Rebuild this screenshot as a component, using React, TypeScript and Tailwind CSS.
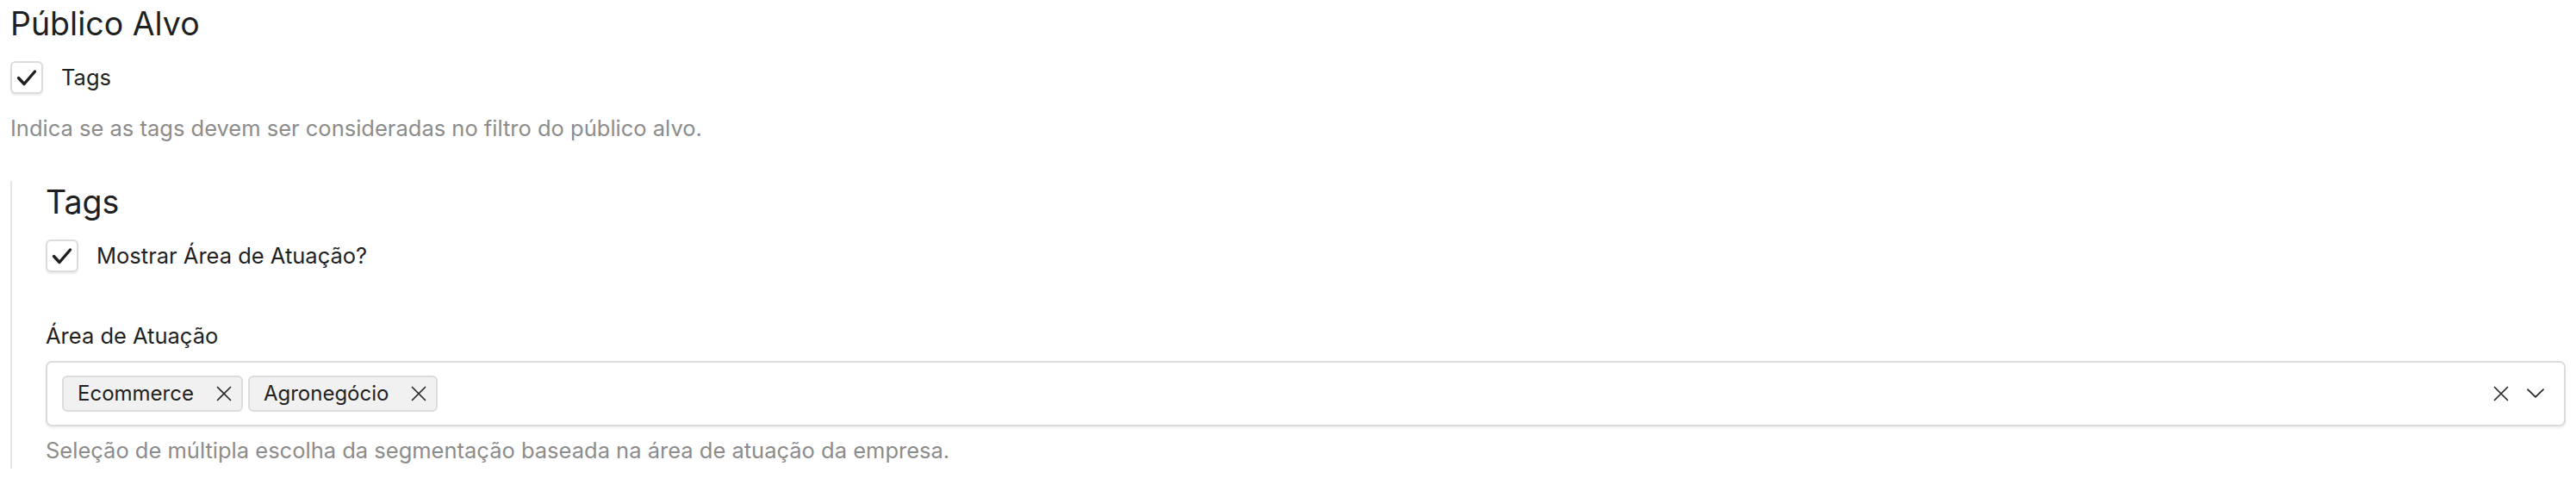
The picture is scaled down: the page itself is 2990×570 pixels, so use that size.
function CheckBox() {
  return (
    <span className="flex h-[38px] w-[38px] shrink-0 items-center justify-center rounded-[6px] border-2 border-[#dcdcdc] bg-white shadow-[0_2px_2px_rgba(0,0,0,0.08)]">
      <svg viewBox="0 0 34 34" className="h-[34px] w-[34px]" fill="none" stroke="#1f1f1f" strokeWidth={3.4} strokeLinecap="round" strokeLinejoin="round">
        <path d="M7.5 17.5l6.5 7L26.5 10" />
      </svg>
    </span>
  );
}

function Cross({ size = 18 }: { size?: number }) {
  return (
    <svg viewBox="0 0 18 18" width={size} height={size} fill="none" stroke="#2a2a2a" strokeWidth={1.7} strokeLinecap="round">
      <path d="M1.5 1.5l15 15M16.5 1.5l-15 15" />
    </svg>
  );
}

function Chip({ label }: { label: string }) {
  return (
    <span className="flex h-[42px] items-center gap-[26px] rounded-[6px] border-2 border-[#dcdcdc] bg-[#f1f1f1] pl-[16px] pr-[11px] text-[24px] text-[#222]">
      {label}
      <Cross />
    </span>
  );
}

export default function App() {
  return (
    <div className="bg-white px-3 pt-[6px] font-['Inter',sans-serif] text-[#1f1f1f]">
      <h2 className="text-[37.5px] leading-[44px]">Público Alvo</h2>
      <label className="mt-[21px] flex items-center gap-[21px]">
        <CheckBox />
        <span className="text-[25.5px]">Tags</span>
      </label>
      <p className="mt-[24px] text-[25.5px] leading-[32px] text-[#8c8c8c]">Indica se as tags devem ser consideradas no filtro do público alvo.</p>

      <section className="mt-[45px] border-l-2 border-[#e6e6e6] pb-[5px] pl-[39px] pt-[3px]">
        <h3 className="text-[37.5px] leading-[44px]">Tags</h3>
        <label className="mt-[21px] flex items-center gap-[21px]">
          <CheckBox />
          <span className="text-[25.5px]">Mostrar Área de Atuação?</span>
        </label>

        <div className="mt-[57px] text-[25.5px] leading-[32px]">Área de Atuação</div>
        <div className="mt-[13px] flex h-[76px] items-center rounded-[7px] border-2 border-[#dcdcdc] bg-white pl-[17px] pr-[23px] shadow-[0_2px_3px_rgba(0,0,0,0.07)]">
          <div className="flex flex-1 gap-[6px]">
            <Chip label="Ecommerce" />
            <Chip label="Agronegócio" />
          </div>
          <div className="flex items-center gap-[21px]">
            <Cross />
            <svg viewBox="0 0 20 11" width={20} height={11} fill="none" stroke="#2a2a2a" strokeWidth={1.8} strokeLinecap="round" strokeLinejoin="round">
              <path d="M1 1.2l9 8.6 9-8.6" />
            </svg>
          </div>
        </div>
        <p className="mt-[12px] text-[25.5px] leading-[32px] text-[#8c8c8c]">Seleção de múltipla escolha da segmentação baseada na área de atuação da empresa.</p>
      </section>
    </div>
  );
}
